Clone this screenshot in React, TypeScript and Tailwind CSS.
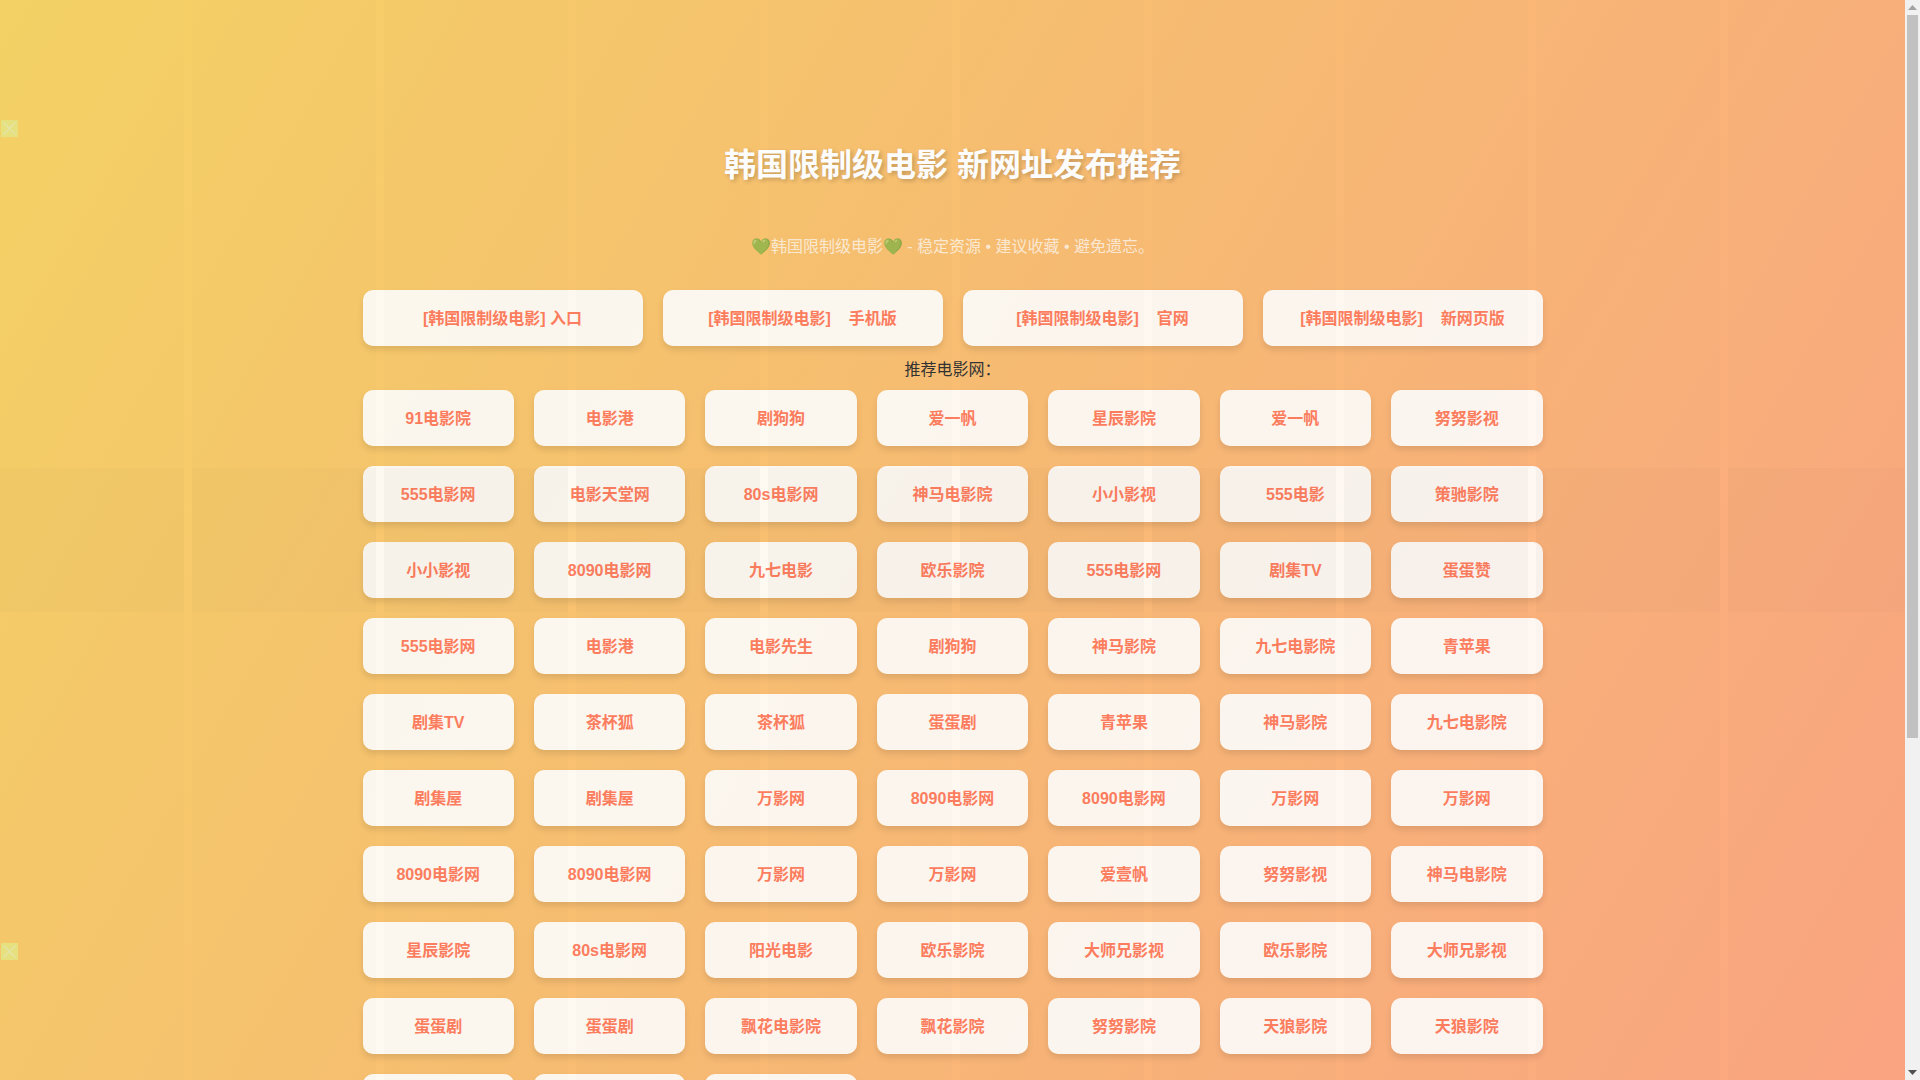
const mainLinks = ['[韩国限制级电影] 入口', '[韩国限制级电影]\u00a0\u00a0\u00a0\u00a0手机版', '[韩国限制级电影]\u00a0\u00a0\u00a0\u00a0官网', '[韩国限制级电影]\u00a0\u00a0\u00a0\u00a0新网页版']

const sites = [
    '91电影院', '电影港', '剧狗狗', '爱一帆', '星辰影院', '爱一帆', '努努影视',
    '555电影网', '电影天堂网', '80s电影网', '神马电影院', '小小影视', '555电影', '策驰影院',
    '小小影视', '8090电影网', '九七电影', '欧乐影院', '555电影网', '剧集TV', '蛋蛋赞',
    '555电影网', '电影港', '电影先生', '剧狗狗', '神马影院', '九七电影院', '青苹果',
    '剧集TV', '茶杯狐', '茶杯狐', '蛋蛋剧', '青苹果', '神马影院', '九七电影院',
    '剧集屋', '剧集屋', '万影网', '8090电影网', '8090电影网', '万影网', '万影网',
    '8090电影网', '8090电影网', '万影网', '万影网', '爱壹帆', '努努影视', '神马电影院',
    '星辰影院', '80s电影网', '阳光电影', '欧乐影院', '大师兄影视', '欧乐影院', '大师兄影视',
    '蛋蛋剧', '蛋蛋剧', '飘花电影院', '飘花影院', '努努影院', '天狼影院', '天狼影院',
    '青苹果', '万影网', '剧集屋',
]

const LinkCard = ({ label }: { label: string }) => (
    <a className="flex h-14 items-center justify-center rounded-[10px] bg-white/90 pt-[2px] text-base font-bold text-[#ff7e5f] shadow-[0_4px_6px_rgba(0,0,0,0.1)]">
        {label}
    </a>
)

const BrokenImage = ({ className }: { className: string }) => (
    <svg className={className} width="17" height="17" viewBox="0 0 17 17">
        <rect width="17" height="17" fill="#e6e07e" />
        <path d="M2.5 2.5 14.5 14.5M14.5 2.5 2.5 14.5" stroke="#e4e4ae" strokeWidth="1.1" />
    </svg>
)

const FakeScrollbar = () => (
    <aside className="flex h-screen w-[15px] shrink-0 flex-col bg-[#f1f1f1]">
        <div className="flex h-[15px] items-center justify-center">
            <svg width="9" height="5" viewBox="0 0 9 5">
                <path d="M4.5 0 9 5H0z" fill="#a3a3a3" />
            </svg>
        </div>
        <div className="mx-[2px] h-[723px] bg-[#c1c1c1]" />
        <div className="flex-1" />
        <div className="flex h-[15px] items-center justify-center">
            <svg width="9" height="5" viewBox="0 0 9 5">
                <path d="M0 0H9L4.5 5z" fill="#505050" />
            </svg>
        </div>
    </aside>
)

export default function App() {
    return (
        <div className="flex h-screen overflow-hidden font-['Liberation_Sans','Noto_Sans_CJK_SC','Noto_Color_Emoji',sans-serif]">
            <main className="relative h-screen min-w-0 flex-1 overflow-hidden">
                <div className="min-h-[1568px] bg-[linear-gradient(120deg,#f6d365_0%,#fda085_100%)]">
                    <div className="mx-auto max-w-[1200px] px-[10px] pt-[140px]">
                        <h1 className="text-center text-[32px] leading-[50px] font-bold text-white [text-shadow:2px_2px_4px_rgba(0,0,0,0.2)]">
                            韩国限制级电影 新网址发布推荐
                        </h1>
                        <p className="mt-[44px] text-center text-base leading-[26px] text-white/70">
                            💚韩国限制级电影💚 - 稳定资源 • 建议收藏 • 避免遗忘。
                        </p>
                        <div className="mt-[30px] grid grid-cols-4 gap-5">
                            {mainLinks.map((label, i) => (
                                <LinkCard key={i} label={label} />
                            ))}
                        </div>
                        <p className="mt-[11px] text-center text-base leading-[26px] text-[#333]">推荐电影网：</p>
                        <div className="mt-[7px] grid grid-cols-7 gap-5">
                            {sites.map((label, i) => (
                                <LinkCard key={i} label={label} />
                            ))}
                        </div>
                    </div>
                </div>

                {/* faint grid overlay, sits above the cards too */}
                <div className="pointer-events-none absolute inset-0 bg-[repeating-linear-gradient(90deg,rgba(0,0,0,0.012)_0,rgba(0,0,0,0.012)_184px,transparent_184px,transparent_192px)]" />
                <div className="pointer-events-none absolute inset-x-0 top-[468px] h-[144px] bg-[repeating-linear-gradient(90deg,rgba(0,0,0,0.017)_0,rgba(0,0,0,0.017)_184px,transparent_184px,transparent_192px)]" />

                <BrokenImage className="absolute top-[120px] left-[1px]" />
                <BrokenImage className="absolute top-[943px] left-[1px]" />
            </main>
            <FakeScrollbar />
        </div>
    )
}
